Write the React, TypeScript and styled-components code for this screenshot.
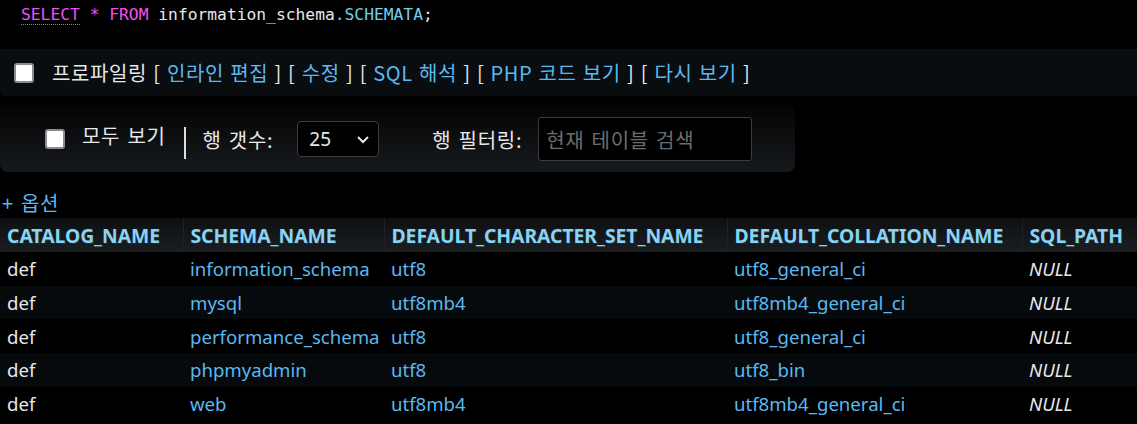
import React from 'react'
import styled, { createGlobalStyle } from 'styled-components'

const GlobalStyle = createGlobalStyle`
  body {
    margin: 0;
    background: #000;
    color: #e6e6e6;
    font-family: 'Noto Sans', 'Noto Sans CJK KR', sans-serif;
  }
`

const colors = {
  link: '#5bb8f0',
  head: '#86d3fb',
  text: '#e8e8e8',
  keyword: '#f050f0',
  panel: '#0a0d10',
}

const korean = `
  font-family: 'Noto Sans CJK KR', sans-serif;
  font-size: 20px;
  letter-spacing: 0.7px;
  word-spacing: 2px;
`

const Page = styled.div`
  width: 1137px;
  height: 424px;
  overflow: hidden;
  background: #000;
`

const Code = styled.div`
  font-family: 'DejaVu Sans Mono', 'Liberation Mono', monospace;
  font-size: 16.3px;
  height: 34px;
  line-height: 30px;
  padding-left: 21px;
  box-sizing: border-box;
  color: ${colors.text};
`

const Keyword = styled.span<{ $dotted?: boolean }>`
  color: ${colors.keyword};
  ${(p) => p.$dotted && 'border-bottom: 1px dotted #888;'}
`

const Ident = styled.span`
  color: #6fd0ee;
`

const ActionBar = styled.div`
  margin-top: 15px;
  height: 47px;
  background: ${colors.panel};
  border-radius: 0 0 0 6px;
  display: flex;
  align-items: center;
  padding-left: 14px;
  gap: 18px;
  ${korean}
  word-spacing: 1.2px;
  letter-spacing: 0.6px;
`

const Check = styled.span`
  width: 16px;
  height: 16px;
  border: 2.5px solid #8b8b96;
  border-radius: 3px;
  background: #fff;
  flex: none;
`

const Links = styled.div`
  color: ${colors.text};
  white-space: pre;
`

const Link = styled.a`
  color: ${colors.link};
  text-decoration: none;
`

const Nav = styled.div`
  margin-top: 10px;
  width: 795px;
  height: 66px;
  background: linear-gradient(#030405, #171a1d);
  border-radius: 0 0 8px 8px;
  display: flex;
  align-items: center;
  padding-left: 45px;
  box-sizing: border-box;
  color: ${colors.text};
  ${korean}
`

const NavLabel = styled.span<{ $gap?: number; $lift?: boolean }>`
  margin-left: ${(p) => p.$gap ?? 0}px;
  white-space: pre;
  ${(p) => p.$lift && 'position: relative; top: -4px;'}
`

const Sep = styled.span`
  width: 2px;
  height: 32px;
  background: #ddd;
  margin: 8px 17px 0 18px;
`

const Select = styled.div`
  margin-left: 24px;
  width: 82px;
  height: 36px;
  box-sizing: border-box;
  border: 1px solid #3a3d40;
  border-radius: 4px;
  background: #000;
  display: flex;
  align-items: center;
  justify-content: space-between;
  padding: 0 8px 0 11px;
  font-family: 'Noto Sans', sans-serif;
  font-size: 19px;
  letter-spacing: 0;
`

const Input = styled.div`
  margin-left: 16px;
  width: 214px;
  height: 44px;
  box-sizing: border-box;
  border: 1px solid #3a3d40;
  border-radius: 3px;
  background: #000;
  display: flex;
  align-items: center;
  padding-left: 7px;
  color: #6d6d6d;
`

const Options = styled.div`
  margin-top: 17px;
  padding-left: 2px;
  height: 28px;
  line-height: 28px;
  color: ${colors.link};
  ${korean}
`

const Table = styled.table`
  border-collapse: collapse;
  width: 1137px;
  margin-top: 1px;
  font-family: 'Noto Sans', sans-serif;
  font-size: 18.6px;
  table-layout: fixed;
`

const Th = styled.th`
  text-align: left;
  height: 34px;
  padding: 0 0 0 7px;
  background: linear-gradient(#0d1012, #1b1e21);
  color: ${colors.head};
  font-size: 19.3px;
  font-weight: 700;
  white-space: nowrap;
  border-left: 1px solid #1e2124;
  text-shadow: 1px 1px 0 #2a2a18;
  &:first-child {
    border-left: none;
  }
`

const Row = styled.tr<{ $alt: boolean }>`
  background: ${(p) => (p.$alt ? '#060a0c' : '#000')};
`

const Td = styled.td<{ $tone: 'plain' | 'blue' | 'null' }>`
  height: 33.7px;
  padding: 0 0 0 7px;
  white-space: nowrap;
  color: ${(p) => (p.$tone === 'blue' ? colors.link : colors.text)};
  font-style: ${(p) => (p.$tone === 'null' ? 'italic' : 'normal')};
`

const columns = [
  { name: 'CATALOG_NAME', width: 183 },
  { name: 'SCHEMA_NAME', width: 201 },
  { name: 'DEFAULT_CHARACTER_SET_NAME', width: 343 },
  { name: 'DEFAULT_COLLATION_NAME', width: 295 },
  { name: 'SQL_PATH', width: 115 },
]

const rows = [
  ['information_schema', 'utf8', 'utf8_general_ci'],
  ['mysql', 'utf8mb4', 'utf8mb4_general_ci'],
  ['performance_schema', 'utf8', 'utf8_general_ci'],
  ['phpmyadmin', 'utf8', 'utf8_bin'],
  ['web', 'utf8mb4', 'utf8mb4_general_ci'],
]

function Chevron() {
  return (
    <svg width="14" height="14" viewBox="0 0 14 14">
      <path d="M2 5l5 5 5-5" fill="none" stroke="#e8e8e8" strokeWidth="2" />
    </svg>
  )
}

export default function App() {
  return (
    <Page>
      <GlobalStyle />
      <Code>
        <Keyword $dotted>SELECT</Keyword> <Keyword>*</Keyword> <Keyword>FROM</Keyword>{' '}
        information_schema<Ident>.SCHEMATA</Ident>;
      </Code>
      <ActionBar>
        <Check />
        <Links>
          프로파일링 [ <Link>인라인 편집</Link> ] [ <Link>수정</Link> ] [ <Link>SQL 해석</Link> ] [{' '}
          <Link>PHP 코드 보기</Link> ] [ <Link>다시 보기</Link> ]
        </Links>
      </ActionBar>
      <Nav>
        <Check />
        <NavLabel $gap={17} $lift>
          모두 보기
        </NavLabel>
        <Sep />
        <NavLabel>행 갯수:</NavLabel>
        <Select>
          <span>25</span>
          <Chevron />
        </Select>
        <NavLabel $gap={53}>행 필터링:</NavLabel>
        <Input>현재 테이블 검색</Input>
      </Nav>
      <Options>+ 옵션</Options>
      <Table>
        <colgroup>
          {columns.map((c) => (
            <col key={c.name} style={{ width: c.width }} />
          ))}
        </colgroup>
        <thead>
          <tr>
            {columns.map((c) => (
              <Th key={c.name}>{c.name}</Th>
            ))}
          </tr>
        </thead>
        <tbody>
          {rows.map((r, i) => (
            <Row key={r[0]} $alt={i % 2 === 1}>
              <Td $tone="plain">def</Td>
              <Td $tone="blue">{r[0]}</Td>
              <Td $tone="blue">{r[1]}</Td>
              <Td $tone="blue">{r[2]}</Td>
              <Td $tone="null">NULL</Td>
            </Row>
          ))}
        </tbody>
      </Table>
    </Page>
  )
}
